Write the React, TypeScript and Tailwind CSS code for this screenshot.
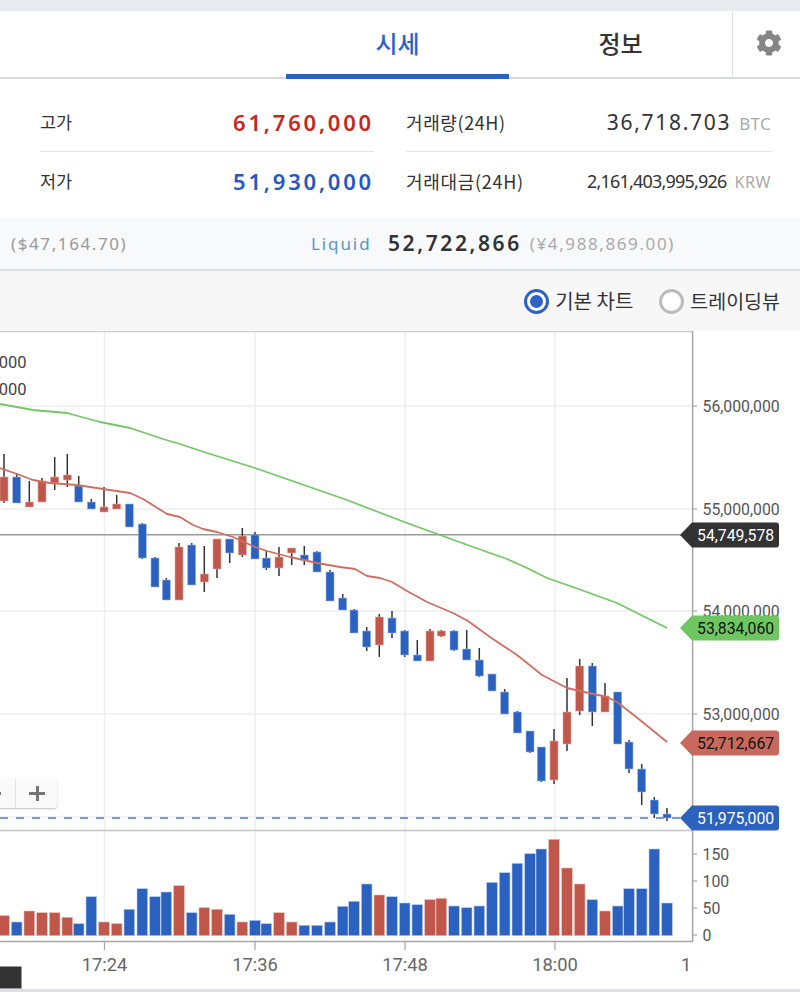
import { FaCog } from "react-icons/fa";

const KR = "font-['Noto_Sans_CJK_KR','Noto_Sans',sans-serif]";
const NUM = "font-['Noto_Sans','Noto_Sans_CJK_KR',sans-serif]";
const AXIS = "Roboto, sans-serif";

const BLUE = "#2c62bf";
const RED = "#c1574b";

// x, wick top, wick bottom, body top, body bottom, colour
type Candle = [number, number, number, number, number, "r" | "b"];

const CANDLES: Candle[] = [
  [4, 454, 503, 477, 501, "r"],
  [16.7, 473, 503, 477, 503, "b"],
  [29.3, 481, 507, 502, 507, "r"],
  [42, 478, 502, 481, 502, "r"],
  [54.7, 457, 490, 477, 483, "r"],
  [67.3, 454, 487, 475, 480, "r"],
  [78.7, 476, 502, 486, 502, "b"],
  [91.3, 499, 509, 502, 509, "b"],
  [104, 487, 512, 507, 512, "r"],
  [116.7, 495, 509, 504, 509, "r"],
  [129.3, 504, 527, 504, 527, "b"],
  [142.3, 523, 559, 524, 558, "b"],
  [155, 557, 587, 558, 587, "b"],
  [166.3, 578, 600, 580, 600, "b"],
  [179, 543, 600, 547, 600, "r"],
  [191.7, 543, 585, 545, 585, "b"],
  [204.3, 546, 592, 574, 582, "r"],
  [217, 539, 578, 539, 569, "r"],
  [229.7, 539, 563, 539, 553, "b"],
  [242.3, 528, 557, 536, 555, "r"],
  [255, 532, 559, 535, 559, "b"],
  [266.3, 551, 570, 558, 568, "b"],
  [279, 547, 576, 557, 568, "r"],
  [291.7, 548, 565, 548, 553, "r"],
  [304.3, 546, 565, 555, 560, "b"],
  [317, 551, 572, 552, 572, "b"],
  [330, 570, 601, 572, 601, "b"],
  [342.7, 594, 610, 598, 610, "b"],
  [354, 609, 633, 610, 633, "b"],
  [366.7, 627, 651, 631, 647, "b"],
  [379.3, 614, 657, 617, 645, "r"],
  [392, 611, 638, 618, 633, "b"],
  [404.7, 630, 657, 631, 655, "b"],
  [417.3, 640, 661, 655, 661, "b"],
  [430, 629, 661, 631, 661, "r"],
  [441.3, 630, 637, 631, 636, "r"],
  [454, 630, 651, 631, 650, "b"],
  [466.7, 630, 660, 649, 660, "b"],
  [479.3, 648, 677, 660, 676, "b"],
  [492, 674, 691, 674, 691, "b"],
  [504.7, 689, 714, 692, 714, "b"],
  [517.3, 711, 733, 712, 733, "b"],
  [530, 731, 753, 731, 752, "b"],
  [541.3, 747, 782, 747, 781, "b"],
  [554, 729, 784, 741, 780, "r"],
  [567, 678, 751, 712, 744, "r"],
  [579.7, 659, 715, 666, 711, "r"],
  [592.3, 663, 726, 666, 712, "b"],
  [605, 683, 712, 696, 712, "r"],
  [617.7, 692, 744, 692, 744, "b"],
  [629, 740, 773, 742, 769, "b"],
  [641.7, 764, 805, 769, 792, "b"],
  [654.3, 797, 818, 800, 814, "b"],
  [667, 808, 821, 814, 818, "b"],
];

// top of each volume bar, same order as the candles
const VOLUME = [
  915.7, 922, 911, 912.7, 912.7, 917.3, 923.7, 896.7, 922, 923.7, 909.3, 888.7, 896.7, 892, 885.7,
  912.7, 907.7, 909.3, 914.3, 922, 920.3, 923.7, 912.7, 922, 925.3, 925.3, 922, 906.3, 901.3, 884,
  895, 896.7, 903, 904.7, 899.7, 898.3, 906, 907.7, 906, 882.3, 872.7, 863.3, 853.7, 849, 839.3,
  868, 884, 899.7, 911, 906, 888.7, 888.7, 849, 903,
];

const GREEN_LINE =
  "0,404 33,410 67,413 100,422 130,428 163,439 180,444 207,453 255,468 347,500 373,510 407,523 440,535 473,547 507,559 527,568 547,578 573,587 617,603 667,628";
const RED_LINE =
  "0,468 17,474 33,480 50,483 77,485 103,489 130,493 143,499 167,514 180,517 193,525 203,529 217,532 233,537 255,547 267,551 290,557 317,563 340,567 355,569 367,576 380,578 392,582 407,591 427,602 453,613 468,621 490,637 517,655 542,675 567,688 580,691 607,697 617,702 640,720 667,742";

const PRICE_TICKS = [
  { y: 406, label: "56,000,000" },
  { y: 509, label: "55,000,000" },
  { y: 611, label: "54,000,000" },
  { y: 714, label: "53,000,000" },
];
const VOLUME_TICKS = [
  { y: 854, label: "150" },
  { y: 881, label: "100" },
  { y: 908, label: "50" },
  { y: 935, label: "0" },
];
const TIME_TICKS = [
  { x: 104.5, label: "17:24" },
  { x: 255, label: "17:36" },
  { x: 405, label: "17:48" },
  { x: 555, label: "18:00" },
];
const TAGS = [
  { y: 535, label: "54,749,578", bg: "#333333", fg: "#ffffff" },
  { y: 628, label: "53,834,060", bg: "#6fc55f", fg: "#111111" },
  { y: 743, label: "52,712,667", bg: "#c9685c", fg: "#111111" },
  { y: 818, label: "51,975,000", bg: BLUE, fg: "#ffffff" },
];

function Chart() {
  return (
    <svg viewBox="0 331 800 658" className="block h-[658px] w-[800px]">
      {PRICE_TICKS.map((t) => (
        <line key={t.y} x1={0} x2={692} y1={t.y} y2={t.y} stroke="#eeeeee" strokeWidth={1.5} />
      ))}
      <line x1={0} x2={692} y1={817} y2={817} stroke="#eeeeee" strokeWidth={1.5} />
      {TIME_TICKS.map((t) => (
        <line key={t.x} x1={t.x} x2={t.x} y1={332} y2={941} stroke="#eeeeee" strokeWidth={1.5} />
      ))}

      <text x={26.5} y={368} textAnchor="end" fontFamily={AXIS} fontSize={16.5} fill="#444444">000</text>
      <text x={26.5} y={395} textAnchor="end" fontFamily={AXIS} fontSize={16.5} fill="#444444">000</text>

      <line x1={0} x2={692} y1={534.8} y2={534.8} stroke="#999999" strokeWidth={1.5} />
      <line x1={0} x2={680} y1={818} y2={818} stroke="#7099e6" strokeWidth={2} strokeDasharray="8 8" />

      {CANDLES.map(([x, wt, wb, bt, bb, c]) => (
        <g key={x}>
          <line x1={x} x2={x} y1={wt} y2={wb} stroke="#333333" strokeWidth={1.5} />
          <rect
            x={x - 4}
            y={bt}
            width={8}
            height={bb - bt}
            fill={c === "r" ? RED : BLUE}
            stroke={c === "r" ? "#e2a79f" : "#9db8ea"}
            strokeWidth={0.6}
          />
        </g>
      ))}

      <polyline points={GREEN_LINE} fill="none" stroke="#74c765" strokeWidth={1.8} strokeLinejoin="round" />
      <polyline points={RED_LINE} fill="none" stroke="#cf6f62" strokeWidth={1.8} strokeLinejoin="round" />

      {/* volume pane */}
      {CANDLES.map(([x, , , , , c], i) => (
        <rect
          key={x}
          x={x - 5.3}
          y={VOLUME[i]}
          width={10.6}
          height={935.7 - VOLUME[i]}
          fill={c === "r" ? RED : BLUE}
          stroke={c === "r" ? "#e9b9b3" : "#b5c9ef"}
          strokeWidth={0.6}
        />
      ))}

      {/* frame and axes */}
      <line x1={0} x2={692} y1={331.5} y2={331.5} stroke="#cccccc" strokeWidth={1.5} />
      <line x1={0} x2={692} y1={830.6} y2={830.6} stroke="#c4c4c4" strokeWidth={1.5} />
      <line x1={0} x2={693} y1={941.6} y2={941.6} stroke="#a6a6a6" strokeWidth={1.5} />
      <line x1={692.6} x2={692.6} y1={331} y2={942} stroke="#a6a6a6" strokeWidth={1.5} />

      {PRICE_TICKS.map((t) => (
        <g key={t.y}>
          <line x1={692} x2={697} y1={t.y} y2={t.y} stroke="#a6a6a6" strokeWidth={1.2} />
          <text x={702.5} y={t.y + 5.5} fontFamily={AXIS} fontSize={15.8} fill="#555555">{t.label}</text>
        </g>
      ))}
      {VOLUME_TICKS.map((t) => (
        <g key={t.y}>
          <line x1={692} x2={697} y1={t.y} y2={t.y} stroke="#a6a6a6" strokeWidth={1.2} />
          <text x={702.5} y={t.y + 5.5} fontFamily={AXIS} fontSize={15.8} fill="#555555">{t.label}</text>
        </g>
      ))}
      {TIME_TICKS.map((t) => (
        <g key={t.x}>
          <line x1={t.x} x2={t.x} y1={941} y2={950} stroke="#a6a6a6" strokeWidth={1.2} />
          <text x={t.x} y={971} textAnchor="middle" fontFamily={AXIS} fontSize={18.3} fill="#666666">{t.label}</text>
        </g>
      ))}
      <text x={681} y={971} fontFamily={AXIS} fontSize={18.3} fill="#666666">1</text>

      {TAGS.map((t) => (
        <g key={t.y}>
          <path
            d={`M680 ${t.y} L692 ${t.y - 12.5} H776 Q779 ${t.y - 12.5} 779 ${t.y - 9.5} V${t.y + 9.5} Q779 ${t.y + 12.5} 776 ${t.y + 12.5} H692 Z`}
            fill={t.bg}
          />
          <text x={697} y={t.y + 5.5} fontFamily={AXIS} fontSize={15.8} fill={t.fg}>{t.label}</text>
        </g>
      ))}

      <rect x={0} y={966.5} width={21.5} height={22} fill="#333333" />
    </svg>
  );
}

function Stat({ label, value, valueClass, line }: { label: string; value: string; valueClass: string; line?: boolean }) {
  return (
    <div className={`flex h-[58px] items-center justify-between ${line ? "border-b border-[#e4e5ea]" : ""}`}>
      <span className={`${KR} text-[17.5px] text-[#333333]`}>{label}</span>
      <span className={`${NUM} text-[22px] font-semibold tracking-[2.8px] ${valueClass}`}>{value}</span>
    </div>
  );
}

export default function App() {
  return (
    <div className={`${KR} relative h-[992px] w-[800px] overflow-hidden bg-white`}>
      <div className="h-[11px] bg-[#e9eaef]" />

      <div className="flex h-[68px] justify-end border-b-2 border-[#d9dae0]">
        <div className="relative flex w-[223px] items-center justify-center pb-[2px] text-[24px] font-medium text-[#2c62c8]">
          시세
          <span className="absolute inset-x-0 bottom-[-2px] h-[5px] bg-[#2c62c8]" />
        </div>
        <div className="flex w-[223px] items-center justify-center pb-[2px] text-[24px] font-medium text-[#333333]">
          정보
        </div>
        <div className="flex w-[68px] items-center justify-center border-l border-[#dfe0e5] pb-[2px] pl-1">
          <FaCog className="text-[26px] text-[#858585]" />
        </div>
      </div>

      <div className="flex h-[139px] gap-8 pl-10 pr-7 pt-[15px]">
        <div className="w-[334px]">
          <Stat label="고가" value="61,760,000" valueClass="text-[#c4281c]" line />
          <Stat label="저가" value="51,930,000" valueClass="text-[#2358c4]" />
        </div>
        <div className="w-[366px]">
          <div className="flex h-[58px] items-center justify-between border-b border-[#e4e5ea]">
            <span className="text-[18px] tracking-[0.6px] text-[#333333]">거래량(24H)</span>
            <span className="flex items-baseline gap-[8px] pr-[1px]">
              <span className={`${NUM} text-[21px] tracking-[1.7px] text-[#333333]`}>36,718.703</span>
              <span className={`${NUM} text-[17px] tracking-[0.3px] text-[#aaaaaa]`}>BTC</span>
            </span>
          </div>
          <div className="flex h-[58px] items-center justify-between">
            <span className="text-[18px] tracking-[0.7px] text-[#333333]">거래대금(24H)</span>
            <span className="flex items-baseline gap-[8px] pr-[1px]">
              <span className={`${NUM} text-[18px] tracking-[-0.8px] text-[#333333]`}>2,161,403,995,926</span>
              <span className={`${NUM} text-[16px] tracking-[0.6px] text-[#aaaaaa]`}>KRW</span>
            </span>
          </div>
        </div>
      </div>

      <div className={`${NUM} flex h-[53px] items-center border-b-2 border-[#dcdde1] bg-[#f8f9fb] pl-[11px]`}>
        <span className="w-[300px] text-[17px] tracking-[1.6px] text-[#999999]">($47,164.70)</span>
        <span className="w-[77px] text-[17px] tracking-[1.9px] text-[#5b93c9]">Liquid</span>
        <span className="text-[21px] font-semibold tracking-[2.6px] text-[#333333]">52,722,866</span>
        <span className="ml-[8px] text-[17px] tracking-[1.6px] text-[#aaaaaa]">(¥4,988,869.00)</span>
      </div>

      <div className="flex h-[60px] items-center justify-end gap-[26px] bg-[#f7f7f8] pr-5">
        <div className="flex items-center gap-[6px]">
          <span className="flex h-[25px] w-[25px] items-center justify-center rounded-full border-[3px] border-[#2c62c8] bg-white">
            <span className="h-[13px] w-[13px] rounded-full bg-[#2c62c8]" />
          </span>
          <span className="text-[20px] text-[#333333]">기본 차트</span>
        </div>
        <div className="flex items-center gap-[6px]">
          <span className="h-[25px] w-[25px] rounded-full border-[3px] border-[#bbbbbb] bg-white" />
          <span className="text-[19.5px] text-[#333333]">트레이딩뷰</span>
        </div>
      </div>

      <div className="relative">
        <Chart />
        <div className="absolute left-[-24px] top-[448px] flex h-[29px] w-[81px] rounded-[3px] bg-[#fafafa] shadow-[0_1px_2px_rgba(0,0,0,0.25)]">
          <div className="flex w-[40px] items-center justify-end border-r border-[#e2e2e2] pr-[14px]">
            <span className="h-[3px] w-[10px] bg-[#777777]" />
          </div>
          <div className="relative flex-1">
            <span className="absolute left-[13px] top-[13px] h-[3px] w-[16px] bg-[#777777]" />
            <span className="absolute left-[19.5px] top-[7px] h-[15px] w-[3px] bg-[#777777]" />
          </div>
        </div>
      </div>

      <div className="h-[3px] bg-[#dfdfe5]" />
    </div>
  );
}
